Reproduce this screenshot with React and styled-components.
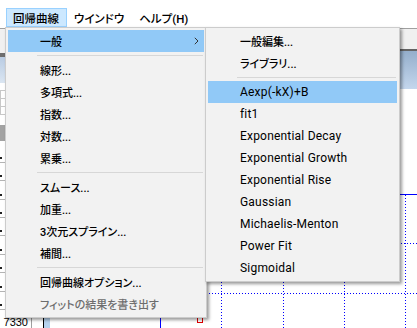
import React from "react";
import styled, { createGlobalStyle } from "styled-components";

const GlobalStyle = createGlobalStyle`
  html, body {
    margin: 0;
    padding: 0;
    background: #ffffff;
  }
`;

const Window = styled.div`
  position: relative;
  width: 417px;
  height: 328px;
  overflow: hidden;
  background: #ffffff;
  display: flex;
  flex-direction: column;
  font-family: Roboto, "Noto Sans CJK JP", sans-serif;
  font-size: 12px;
  font-feature-settings: "palt";
  color: #000000;
`;

const MenuBar = styled.div`
  display: flex;
  height: 28px;
  padding: 8px 0 0 6px;
  box-sizing: border-box;
  font-size: 11.5px;
  font-weight: 500;
`;

const BarItem = styled.div`
  height: 19px;
  padding: 0 7px 0 6px;
  display: flex;
  align-items: center;
  box-sizing: border-box;
  border: 1px solid ${(p) => (p.$open ? "#99d1ff" : "transparent")};
  background: ${(p) => (p.$open ? "#cce8ff" : "transparent")};
`;

const Toolbar = styled.div`
  height: 21px;
  border-top: 1px solid #a0a0a0;
  background: #f0f0f0;
  box-sizing: border-box;
`;

const Body = styled.div`
  flex: 1;
  display: flex;
  min-height: 0;
`;

const SheetPane = styled.div`
  width: 32px;
  display: flex;
  flex-direction: column;
  border-right: 1px solid #a0a0a0;
  box-sizing: border-box;
`;

const SheetTop = styled.div`
  height: 5px;
  background: #f0f0f0;
`;

const SheetTitle = styled.div`
  height: 30px;
  border-top: 4px solid #6e6e6e;
  background: linear-gradient(#b9cce3, #dbe6f2);
`;

const IconGrid = styled.div`
  margin: 7px 0 10px;
  height: 24px;
  display: grid;
  grid-template-columns: 4px 4px 4px;
  grid-template-rows: 7px 7px 7px;
  gap: 1px;
  padding: 1px;
  background: #c8c8c8;
  width: 16px;
`;

const GridCell = styled.div`
  background: #ffffff;
`;

const GreyBlock = styled.div`
  height: 18px;
  background: #a3a3a3;
  margin-bottom: 4px;
`;

const SheetRow = styled.div`
  height: 18.4px;
  flex-shrink: 0;
  box-sizing: border-box;
  border-bottom: 1px solid #b4b4b4;
  position: relative;
  &::before {
    content: "";
    position: absolute;
    left: 0;
    bottom: 3px;
    width: 2px;
    height: 2px;
    background: #202020;
  }
`;

const AxisLabel = styled.div`
  margin-top: 6px;
  padding-right: 3px;
  text-align: right;
  font-family: "Liberation Sans", sans-serif;
  font-size: 11px;
  line-height: 12px;
`;

const GraphPane = styled.div`
  flex: 1;
  display: flex;
  flex-direction: column;
`;

const GraphTitle = styled.div`
  height: 40px;
  flex-shrink: 0;
  border-top: 2px solid #646464;
  box-sizing: border-box;
  background: linear-gradient(#94aecb, #c4d7ed);
`;

const Plot = styled.div`
  flex: 1;
  background: #ffffff;
  svg {
    display: block;
  }
`;

const Menu = styled.div`
  position: absolute;
  left: ${(p) => p.$left}px;
  top: ${(p) => p.$top}px;
  width: ${(p) => p.$width}px;
  box-sizing: border-box;
  padding: 2px;
  background: #f2f2f2;
  border: 1px solid #cccccc;
  box-shadow: 2px 2px 3px rgba(0, 0, 0, 0.4);
  z-index: ${(p) => p.$z};
`;

const Item = styled.div`
  height: 22px;
  display: flex;
  align-items: center;
  padding: 0 5px 0 32px;
  white-space: nowrap;
  font-size: ${(p) => (p.$cjk ? "11px" : "12px")};
  font-weight: ${(p) => (p.$cjk ? 500 : 400)};
  letter-spacing: ${(p) => (p.$cjk ? "0" : "0.2px")};
  background: ${(p) => (p.$active ? "#91c9f7" : "transparent")};
  color: ${(p) => (p.$disabled ? "#6d6d6d" : "#000000")};
`;

const Label = styled.span`
  flex: 1;
`;

const Separator = styled.div`
  height: 7px;
  display: flex;
  align-items: center;
  padding: 0 1px 0 29px;
  &::after {
    content: "";
    flex: 1;
    height: 1px;
    background: #d7d7d7;
  }
`;

const Chevron = () => (
  <svg width="5" height="8" viewBox="0 0 5 8">
    <path d="M0.8 0.8 L4 4 L0.8 7.2" fill="none" stroke="#333" strokeWidth="1" />
  </svg>
);

const mainItems = [
  { label: "一般", active: true, sub: true },
  "-",
  "線形...",
  "多項式...",
  "指数...",
  "対数...",
  "累乗...",
  "-",
  "スムース...",
  "加重...",
  "3次元スプライン...",
  "補間...",
  "-",
  "回帰曲線オプション...",
  { label: "フィットの結果を書き出す", disabled: true },
];

const subItems = [
  "一般編集...",
  "ライブラリ...",
  "-",
  { label: "Aexp(-kX)+B", active: true },
  "fit1",
  "Exponential Decay",
  "Exponential Growth",
  "Exponential Rise",
  "Gaussian",
  "Michaelis-Menton",
  "Power Fit",
  "Sigmoidal",
];

const isJapanese = (s) => /[\u3040-\u30ff\u4e00-\u9fff]/.test(s);

const renderItems = (items) =>
  items.map((it, i) => {
    if (it === "-") return <Separator key={i} />;
    const o = typeof it === "string" ? { label: it } : it;
    return (
      <Item
        key={i}
        $active={o.active}
        $disabled={o.disabled}
        $cjk={isJapanese(o.label)}
      >
        <Label>{o.label}</Label>
        {o.sub && <Chevron />}
      </Item>
    );
  });

const rows = Array.from({ length: 9 });

const PlotChart = () => {
  const blue = "#0000ff";
  return (
    <svg width="385" height="239" viewBox="0 0 385 239">
      <line x1="168" y1="105.5" x2="385" y2="105.5" stroke={blue} />
      {[189, 251, 312, 373].map((x) => (
        <line key={x} x1={x + 0.5} y1="106" x2={x + 0.5} y2="239" stroke={blue} strokeDasharray="1 2" />
      ))}
      {[154, 204].map((y) => (
        <line key={y} x1="12" y1={y + 0.5} x2="385" y2={y + 0.5} stroke={blue} strokeDasharray="1 2" />
      ))}
      <rect x="12" y="180" width="6" height="59" fill="#b7d3ee" />
      <line x1="11.5" y1="106" x2="11.5" y2="239" stroke="#000" />
      <line x1="128.5" y1="150" x2="128.5" y2="239" stroke={blue} />
      <rect x="165.5" y="228.5" width="5" height="5" fill="none" stroke="#e00000" />
    </svg>
  );
};

export default function App() {
  return (
    <>
      <GlobalStyle />
      <Window>
        <MenuBar>
          <BarItem $open>回帰曲線</BarItem>
          <BarItem>ウインドウ</BarItem>
          <BarItem>ヘルプ(H)</BarItem>
        </MenuBar>
        <Toolbar />
        <Body>
          <SheetPane>
            <SheetTop />
            <SheetTitle />
            <IconGrid>
              {Array.from({ length: 9 }).map((_, i) => (
                <GridCell key={i} />
              ))}
            </IconGrid>
            <GreyBlock />
            {rows.map((_, i) => (
              <SheetRow key={i} />
            ))}
            <AxisLabel>7330</AxisLabel>
          </SheetPane>
          <GraphPane>
            <GraphTitle />
            <Plot>
              <PlotChart />
            </Plot>
          </GraphPane>
        </Body>
        <Menu $left={5} $top={27} $width={202} $z={1}>
          {renderItems(mainItems)}
        </Menu>
        <Menu $left={205} $top={27} $width={195} $z={2}>
          {renderItems(subItems)}
        </Menu>
      </Window>
    </>
  );
}
